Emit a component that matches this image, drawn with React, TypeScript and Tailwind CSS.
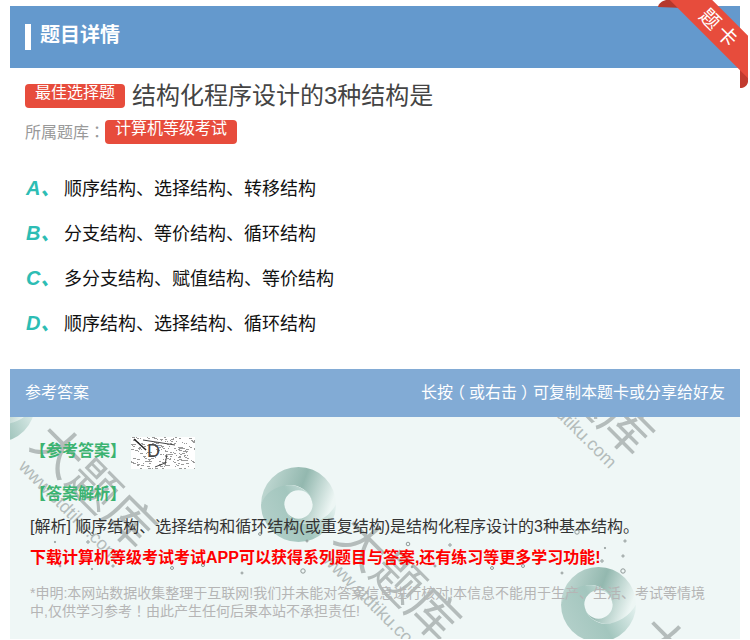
const font = { fontFamily: '"Liberation Sans","Noto Sans CJK SC",sans-serif' };

const options = [
  ["A", "顺序结构、选择结构、转移结构"],
  ["B", "分支结构、等价结构、循环结构"],
  ["C", "多分支结构、赋值结构、等价结构"],
  ["D", "顺序结构、选择结构、循环结构"],
];

const specks: [number, number, number][] = [
  [55, 543, 0.7], [88, 543, 1.2], [92, 535, 1.5], [60, 567, 0.9], [92, 570, 0.7], [113, 567, 1.1],
  [172, 569, 1.5], [203, 566, 1.6], [242, 574, 1], [303, 572, 2.2], [307, 542, 1], [260, 535, 1.4],
  [408, 545, 1.8], [450, 546, 1.2], [492, 569, 1.5], [523, 567, 1.5], [562, 574, 1], [623, 572, 2.2],
  [625, 542, 1.1], [623, 557, 1.1], [602, 562, 1.2], [577, 533, 2.2], [605, 549, 0.7], [412, 568, 0.8], [435, 567, 1],
];

function Swirl({ className }: { className: string }) {
  const top = "M0 37A37 37 0 0 1 74 37C70 48 60 56 46 56C34 56 24 48 23 37A14 14 0 0 0 51 37C50 26 40 18 30 18C18 18 6 26 0 37Z";
  return (
    <svg viewBox="0 0 74 74" className={className}>
      <defs>
        <linearGradient id="swirlT" x1="0.1" y1="0.2" x2="1" y2="0.45">
          <stop offset="0" stopColor="#bdd6d0" />
          <stop offset="0.5" stopColor="#93b8af" />
          <stop offset="1" stopColor="#edf6f4" />
        </linearGradient>
        <linearGradient id="swirlB" x1="1" y1="0.3" x2="0" y2="0.7">
          <stop offset="0" stopColor="#b4d0ca" />
          <stop offset="0.5" stopColor="#a3c6be" />
          <stop offset="1" stopColor="#e8f4f2" />
        </linearGradient>
      </defs>
      <path d={top} fill="url(#swirlT)" />
      <path d={top} fill="url(#swirlB)" transform="rotate(180 37 37)" />
    </svg>
  );
}

function Mark({ className }: { className: string }) {
  return (
    <div className={"absolute w-[160px] h-[68px] flex flex-col items-center rotate-45 text-[#b4bcbb] " + className}>
      <span className="text-[50px] leading-[50px] whitespace-nowrap">大题库</span>
      <span className="text-[18px] leading-[18px] whitespace-nowrap">www.stdtiku.com</span>
    </div>
  );
}

function Noise() {
  const dots = [] as { x: number; y: number; w: number }[];
  let seed = 7;
  for (let i = 0; i < 190; i++) {
    seed = (seed * 97 + 31) % 1009;
    const x = seed % 64;
    seed = (seed * 97 + 31) % 1009;
    const y = seed % 32;
    dots.push({ x, y, w: 1 + (seed % 3) });
  }
  return (
    <div className="relative w-16 h-8 bg-white overflow-hidden">
      <svg viewBox="0 0 64 32" className="absolute inset-0 w-16 h-8">
        {dots.map((d, i) => (
          <rect key={i} x={d.x} y={d.y} width={d.w} height="1" fill="#9a9a9a" />
        ))}
        <path d="M3 2 15 13" stroke="#222" strokeWidth="1.6" fill="none" />
        <path d="M12 3 44 8M36 17 34 28M24 30 34 26" stroke="#444" strokeWidth="1" fill="none" />
      </svg>
      <span className="absolute left-[16px] top-[2px] text-[18px] leading-[24px] text-[#444]">D</span>
    </div>
  );
}

const tc = "font-['Noto_Sans_CJK_TC']";

export default function App() {
  return (
    <div style={font} className="relative w-[750px] h-[640px] overflow-hidden bg-white">
      <div className="mx-2.5 pt-1.5">
        <div className="h-[62px] bg-[#6499cd] flex items-center pl-[15px]">
          <div className="w-1.5 h-[26px] bg-white" />
          <div className="ml-[9px] mb-1 text-[20px] font-bold text-white">题目详情</div>
        </div>

        <div className="pl-[15px] mt-[15px] flex items-center h-[26px]">
          <span className="w-[100px] h-6 bg-[#e74c3c] rounded text-white text-[16px] leading-[17px] text-center">最佳选择题</span>
          <span className="ml-[7px] text-[24px] text-[#444]">结构化程序设计的3种结构是</span>
        </div>

        <div className="pl-[15px] mt-[11px] flex items-center h-6">
          <span className="text-[16px] text-[#999]">所属题库<span className={tc}>：</span></span>
          <span className="w-[132px] h-6 bg-[#e74c3c] rounded text-white text-[16px] leading-[17px] text-center">计算机等级考试</span>
        </div>

        <div className="mt-[23px] pl-4 flex flex-col">
          {options.map(([k, t]) => (
            <div key={k} className="h-[45px] flex items-center">
              <span className="w-[38px] mb-1 text-[20px] font-bold italic text-[#2dbdb4]">{k}、</span>
              <span className="text-[18px] text-[#111]">{t}</span>
            </div>
          ))}
        </div>

        <div className="mt-[22px] relative h-[270px] overflow-hidden">
          <div className="h-12 bg-[#82abd5] flex items-center justify-between pl-[15px] pr-[15px] text-white text-[16px] relative z-10">
            <span>参考答案</span>
            <span>
              长按<span className="inline-block -translate-x-1">（</span>或右击<span className="inline-block translate-x-1">）</span>可复制本题卡或分享给好友
            </span>
          </div>
          <div className="relative h-[222px] bg-[#eff7f6] pl-5">
            <Swirl className="absolute left-[-50px] top-[-50px] w-[75px] h-[75px]" />
            <Swirl className="absolute left-[251px] top-[50px] w-[75px] h-[75px]" />
            <Swirl className="absolute left-[551px] top-[150px] w-[75px] h-[75px]" />
            <Mark className="left-[-3px] top-[42px]" />
            <Mark className="left-[301px] top-[135px]" />
            <Mark className="left-[494px] top-[-51px]" />
            <Mark className="left-[601px] top-[235px]" />
            <svg viewBox="0 0 730 222" className="absolute left-0 top-0 w-[730px] h-[222px]">
              {specks.map(([x, y, r], i) => (
                <circle key={i} cx={x - 10} cy={y - 418} r={r} fill="none" stroke="#8f9897" strokeWidth="1" />
              ))}
            </svg>
            <div className="relative">
              <div className="flex items-start pt-5">
                <span className="mt-[2px] text-[16px] font-bold text-[#3cb371] w-[101px]">【参考答案】</span>
                <Noise />
              </div>
              <div className="mt-[13px] text-[16px] font-bold text-[#3cb371]">【答案解析】</div>
              <div className="mt-[9px] text-[16px] text-[#333]">[解析] 顺序结构、选择结构和循环结构(或重复结构)是结构化程序设计的3种基本结构。</div>
              <div className="mt-[7px] text-[16px] font-bold text-[#ff0000]">下载计算机等级考试考试APP可以获得系列题目与答案,还有练习等更多学习功能!</div>
              <div className="mt-[15px] text-[14px] leading-[17px] text-[#b5b5b5] w-[690px]">*申明:本网站数据收集整理于互联网!我们并未能对答案信息进行核对!本信息不能用于生产、生活、考试等情境中,仅供学习参考<span className={tc}>！</span>由此产生任何后果本站不承担责任!</div>
            </div>
          </div>
        </div>
      </div>

      <div className="absolute left-[650px] top-0 w-[98px] h-[92px] overflow-hidden">
        <svg viewBox="0 0 98 92" className="absolute inset-0 w-[98px] h-[92px]">
          <path d="M8 7C9 3 12 1 16 0H24L34 8Z" fill="#b5382c" />
          <path d="M90 68L98 76V82C97 86 94 88 90 88Z" fill="#c23b2f" />
        </svg>
        <div className="absolute left-0 top-[14px] w-[140px] h-[30px] rotate-45 bg-[#e74c3c] flex items-center justify-center text-white text-[20px] leading-[30px] tracking-[4px]">题卡</div>
      </div>
    </div>
  );
}
